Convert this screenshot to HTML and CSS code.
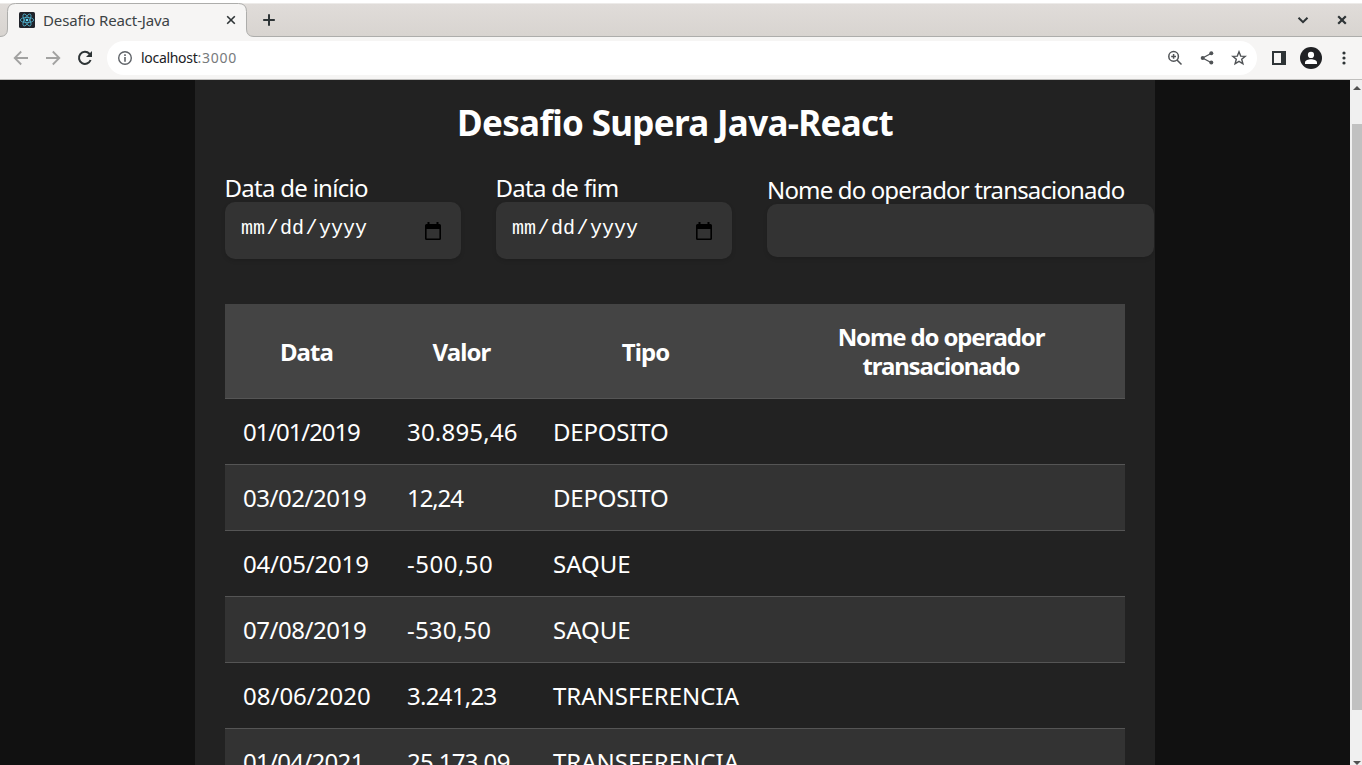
FILE: index.html
```html
<!DOCTYPE html>
<html lang="pt-BR">
<head>
<meta charset="utf-8">
<title>Desafio React-Java</title>
<link rel="stylesheet" href="styles.css">
</head>
<body>
<div class="window">
  <header class="tabstrip">
    <div class="tab">
      <svg class="tab-shape" width="256" height="34" viewBox="0 0 256 34"><path d="M0 33.5 Q7.5 33.5 7.5 26 V8.5 Q7.5 .5 15.5 .5 H238.5 Q246.5 .5 246.5 8.5 V26 Q246.5 33.5 254 33.5 H256 V34 H0Z" fill="#f6f5f4"/><path d="M0 33.5 Q7.5 33.5 7.5 26 V8.5 Q7.5 .5 15.5 .5 H238.5 Q246.5 .5 246.5 8.5 V26 Q246.5 33.5 254 33.5 H256" fill="none" stroke="#adadab"/></svg>
      <svg class="favicon" width="16" height="16" viewBox="0 0 16 16"><rect width="16" height="16" rx="1.5" fill="#20232a"/><g fill="none" stroke="#4fb3cf" stroke-width=".8"><ellipse cx="8" cy="8" rx="6.7" ry="2.6"/><ellipse cx="8" cy="8" rx="6.7" ry="2.6" transform="rotate(60 8 8)"/><ellipse cx="8" cy="8" rx="6.7" ry="2.6" transform="rotate(120 8 8)"/></g><circle cx="8" cy="8" r="1.3" fill="#61dafb"/></svg>
      <span class="tab-title">Desafio React-Java</span>
      <svg class="tab-close" width="10" height="10" viewBox="0 0 10 10"><path d="M1.2 1.2 8.8 8.8M8.8 1.2 1.2 8.8" stroke="#2e3436" stroke-width="1.6"/></svg>
    </div>
    <svg class="new-tab" width="12" height="12" viewBox="0 0 12 12"><path d="M6 .2V11.8M.2 6H11.8" stroke="#2e3436" stroke-width="2"/></svg>
    <div class="window-controls">
      <svg width="12" height="12" viewBox="0 0 12 12"><path d="M1.5 3.8 6 8.2 10.5 3.8" fill="none" stroke="#2e3436" stroke-width="2"/></svg>
      <svg width="10" height="10" viewBox="0 0 10 10"><path d="M1.2 1.2 8.8 8.8M8.8 1.2 1.2 8.8" stroke="#2e3436" stroke-width="2.2"/></svg>
    </div>
  </header>

  <div class="toolbar">
    <div class="nav">
      <svg width="16" height="16" viewBox="0 0 16 16"><path d="M15 8H2M8.2 1.5 1.7 8 8.2 14.5" fill="none" stroke="#a2a2a1" stroke-width="1.8"/></svg>
      <svg width="16" height="16" viewBox="0 0 16 16"><path d="M1 8H14M7.8 1.5 14.3 8 7.8 14.5" fill="none" stroke="#a2a2a1" stroke-width="1.8"/></svg>
      <svg width="16" height="16" viewBox="0 0 16 16"><path d="M13.6 10A6 6 0 1 1 12.4 3.8L14 5.4" fill="none" stroke="#2e3436" stroke-width="2"/><path d="M15 1V7H9Z" fill="#2e3436"/></svg>
    </div>
    <div class="address">
      <svg width="16" height="16" viewBox="0 0 16 16"><circle cx="8" cy="8" r="6.3" fill="none" stroke="#5f6368" stroke-width="1.4"/><path d="M8 7V11.7M8 4.3V6" stroke="#5f6368" stroke-width="1.6"/></svg>
      <span class="url"><span class="host">localhost</span><span class="port">:3000</span></span>
      <div class="address-actions">
        <svg width="16" height="16" viewBox="0 0 16 16" fill="none" stroke="#505356" stroke-width="1.5"><circle cx="6.6" cy="6.4" r="4.8"/><path d="M10 10 14.5 14.5M6.6 4V8.8M4.2 6.4H9"/></svg>
        <svg width="16" height="16" viewBox="0 0 16 16"><path d="M12.5 3.2 3.6 8 12.5 12.8" fill="none" stroke="#505356" stroke-width="1.3"/><g fill="#505356"><circle cx="12.3" cy="3.2" r="2"/><circle cx="3.7" cy="8" r="2"/><circle cx="12.3" cy="12.6" r="2"/></g></svg>
        <svg width="16" height="16" viewBox="0 0 16 16"><path d="M8 1.8 9.7 6.1 14.2 6.4 10.7 9.3 11.9 13.8 8 11.3 4.1 13.8 5.3 9.3 1.8 6.4 6.3 6.1Z" fill="none" stroke="#505356" stroke-width="1.4"/></svg>
      </div>
    </div>
    <div class="tools">
      <svg width="14" height="14" viewBox="0 0 14 14"><path d="M0 0H14V14H0ZM2 2V12H9V2Z" fill="#2e3436" fill-rule="evenodd"/></svg>
      <svg width="22" height="22" viewBox="0 0 22 22"><circle cx="11" cy="11" r="11" fill="#202124"/><circle cx="11" cy="7.9" r="3.1" fill="#fff"/><path d="M5 17V15.5C5 13.2 8.5 12.3 11 12.3S17 13.2 17 15.5V17Z" fill="#fff"/></svg>
      <svg width="4" height="14" viewBox="0 0 4 14" fill="#2e3436"><circle cx="2" cy="2" r="1.6"/><circle cx="2" cy="7" r="1.6"/><circle cx="2" cy="12" r="1.6"/></svg>
    </div>
  </div>

  <div class="viewport">
    <main class="page">
      <h1>Desafio Supera Java-React</h1>
      <form class="filters">
        <div class="field">
          <label class="start">Data de início</label>
          <div class="input date"><span>mm<i>/</i>dd<i>/</i>yyyy</span>
            <svg width="16" height="18" viewBox="0 0 16 18"><path d="M2.5 0H4.5V2H11.5V0H13.5V2H14.5A1.5 1.5 0 0 1 16 3.5V16.5A1.5 1.5 0 0 1 14.5 18H1.5A1.5 1.5 0 0 1 0 16.5V3.5A1.5 1.5 0 0 1 1.5 2H2.5ZM1.6 7V16.4H14.4V7Z" fill="#000" fill-rule="evenodd"/></svg>
          </div>
        </div>
        <div class="field">
          <label class="start">Data de fim</label>
          <div class="input date"><span>mm<i>/</i>dd<i>/</i>yyyy</span>
            <svg width="16" height="18" viewBox="0 0 16 18"><path d="M2.5 0H4.5V2H11.5V0H13.5V2H14.5A1.5 1.5 0 0 1 16 3.5V16.5A1.5 1.5 0 0 1 14.5 18H1.5A1.5 1.5 0 0 1 0 16.5V3.5A1.5 1.5 0 0 1 1.5 2H2.5ZM1.6 7V16.4H14.4V7Z" fill="#000" fill-rule="evenodd"/></svg>
          </div>
        </div>
        <div class="field operator">
          <label class="name">Nome do operador transacionado</label>
          <div class="input"></div>
        </div>
      </form>
      <table>
        <colgroup><col class="c-date"><col class="c-value"><col class="c-type"><col class="c-name"></colgroup>
        <thead><tr><th>Data</th><th>Valor</th><th>Tipo</th><th class="long">Nome do operador transacionado</th></tr></thead>
        <tbody>
          <tr><td class="tightest">01/01/2019</td><td class="wide">30.895,46</td><td class="close">DEPOSITO</td><td></td></tr>
          <tr><td class="snug">03/02/2019</td><td class="tightest">12,24</td><td class="close">DEPOSITO</td><td></td></tr>
          <tr><td class="close">04/05/2019</td><td class="wider">-500,50</td><td>SAQUE</td><td></td></tr>
          <tr><td class="snug">07/08/2019</td><td class="wide">-530,50</td><td>SAQUE</td><td></td></tr>
          <tr><td>08/06/2020</td><td class="tight">3.241,23</td><td>TRANSFERENCIA</td><td></td></tr>
          <tr><td class="tight">01/04/2021</td><td class="tight">25.173,09</td><td>TRANSFERENCIA</td><td></td></tr>
        </tbody>
      </table>
    </main>
    <div class="scrollbar">
      <svg width="8" height="4" viewBox="0 0 8 4"><path d="M0 4 4 0 8 4Z" fill="#505050"/></svg>
      <div class="thumb"></div>
      <svg width="8" height="4" viewBox="0 0 8 4"><path d="M0 0H8L4 4Z" fill="#505050"/></svg>
    </div>
  </div>
</div>
</body>
</html>
```
FILE: styles.css
```css
* { box-sizing: border-box; }
body { margin: 0; font-family: "Noto Sans", sans-serif; overflow: hidden; }
svg { display: block; flex: none; }
.window { display: flex; flex-direction: column; width: 1362px; height: 765px; overflow: hidden; }

.tabstrip { display: flex; align-items: center; height: 37px; flex: none; padding-top: 3px; background: linear-gradient(#fff 0 3px, #edebe9 3px 4px, #e0dcd9 4px, #d8d4d0 36px); border-bottom: 1px solid #adadab; }
.tab { position: relative; display: flex; align-items: center; width: 247px; height: 34px; padding: 0 11px 0 19px; margin-bottom: -1px; }
.tab-shape { position: absolute; left: 0; top: 0; }
.favicon, .tab-title, .tab-close { position: relative; }
.tab-title { flex: 1; margin: -1px 0 0 8px; font-size: 15px; line-height: 20px; letter-spacing: -.13px; color: #3c4245; white-space: nowrap; }
.new-tab { margin-left: 16px; }
.window-controls { display: flex; align-items: center; gap: 28px; margin-left: auto; padding-right: 15px; }

.toolbar { display: flex; align-items: center; height: 43px; flex: none; background: #f6f5f4; border-bottom: 1px solid #c0bfbd; }
.nav { display: flex; gap: 16px; padding: 0 14px 0 13px; }
.address { display: flex; align-items: center; width: 1150px; height: 34px; padding: 0 10px; border-radius: 17px; background: #fff; }
.url { margin-left: 8px; font-size: 14px; line-height: 20px; color: #777a7c; }
.host { color: #202124; letter-spacing: -.3px; }
.port { letter-spacing: .75px; }
.address-actions { display: flex; gap: 16px; margin-left: auto; }
.tools { display: flex; align-items: center; gap: 14px; padding-left: 15px; }
.tools svg:last-child { margin-left: 6px; }

.viewport { display: flex; justify-content: center; flex: 1; min-height: 0; background: #111; color: #fff; }
.page { width: 960px; padding: 0 30px; margin: 0 auto; background: #222; overflow: hidden; }
h1 { margin: 21px 0 0; font-size: 35px; line-height: 44px; letter-spacing: -.68px; text-align: center; white-space: nowrap; }
.filters { display: flex; align-items: center; gap: 35px; margin-top: 28px; width: 930px; }
.field { display: flex; flex-direction: column; width: 236px; font-size: 24px; }
.operator { width: 387px; }
label { line-height: 29px; height: 29px; white-space: nowrap; text-indent: -.5px; }
.start { letter-spacing: -.72px; }
.name { letter-spacing: -.85px; text-indent: 0; }
.input { display: flex; align-items: center; justify-content: space-between; height: 53px; padding: 0 20px 0 16px; border-radius: 10px; background: #333; box-shadow: 0 2px 4px rgba(0, 0, 0, .12); }
.date { height: 57px; }
.date span { margin-top: -4px; font: 20px/24px "Liberation Mono", monospace; }
.date i { font-style: normal; margin: 0 1.5px; }

table { width: 900px; margin-top: 45px; border-collapse: separate; border-spacing: 0; table-layout: fixed; font-size: 24px; line-height: 29px; }
.c-date { width: 164px; }
.c-value { width: 146px; }
.c-type { width: 222px; }
.c-name { width: 368px; }
th { height: 95px; padding: 0 1px 0 0; background: #444; border-bottom: 1px solid #555; letter-spacing: -.9px; }
.long { padding: 0 60px; letter-spacing: -1.15px; }
td { height: 66px; padding: 0 0 0 18px; border-bottom: 1px solid #555; white-space: nowrap; }
tbody tr:nth-child(even) { background: #333; }
.tightest { letter-spacing: -1.1px; }
.tight { letter-spacing: -.7px; }
.snug { letter-spacing: -.45px; }
.close { letter-spacing: -.2px; }
.wide { letter-spacing: .2px; }
.wider { letter-spacing: .5px; }

.scrollbar { display: flex; flex-direction: column; align-items: flex-end; width: 12px; padding: 6px 0 0; background: #f0f0f0; }
.scrollbar svg { margin-right: 1px; }
.thumb { width: 10px; height: 586px; margin: 34px 0 51px; background: #c1c1c1; flex: none; }
```
